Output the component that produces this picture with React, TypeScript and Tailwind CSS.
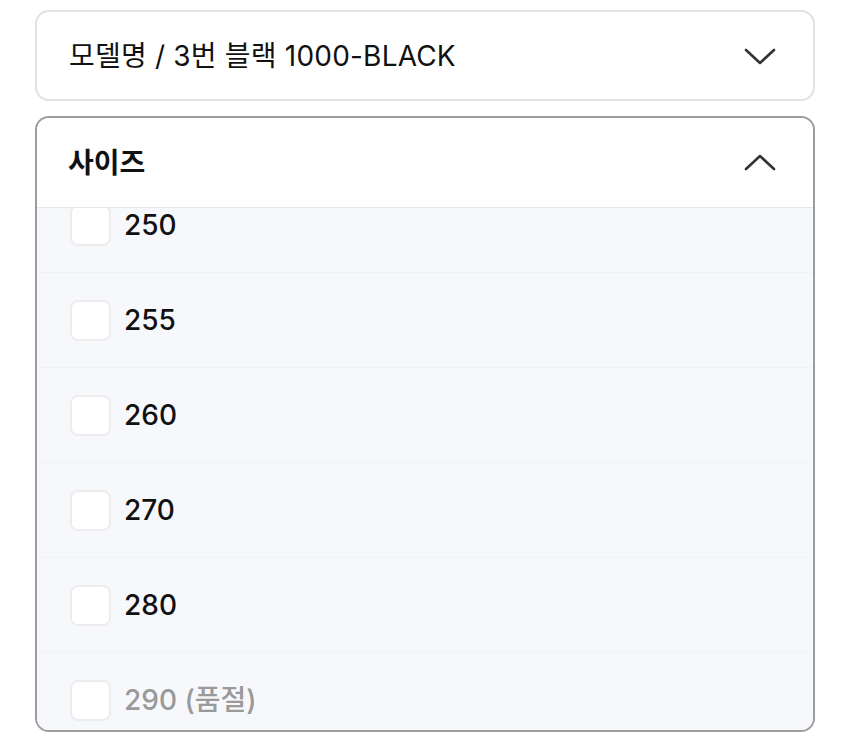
import React from "react";

const sizes = [
  { label: "250", soldOut: false },
  { label: "255", soldOut: false },
  { label: "260", soldOut: false },
  { label: "270", soldOut: false },
  { label: "280", soldOut: false },
  { label: "290 (품절)", soldOut: true },
];

const Chevron = ({ up }: { up?: boolean }) => (
  <svg width="34" height="20" viewBox="0 0 34 20" fill="none" stroke="#333" strokeWidth={2.6} strokeLinecap="round" strokeLinejoin="round">
    {up ? <path d="M3 16 L17 3 L31 16" /> : <path d="M3 4 L17 17 L31 4" />}
  </svg>
);

export default function App() {
  return (
    <div
      className="w-[850px] h-[741px] bg-white pt-[10px] px-[35px] overflow-hidden"
      style={{ fontFamily: 'Inter, "Noto Sans CJK KR", sans-serif' }}
    >
      {/* model select */}
      <div className="h-[91px] rounded-[14px] border-2 border-[#e2e2e2] flex items-center justify-between pl-[32px] pr-[36px]">
        <span className="text-[28px] text-[#111] tracking-[0.2px]">모델명 / 3번 블랙 1000-BLACK</span>
        <Chevron />
      </div>

      {/* size select */}
      <div className="mt-[15px] h-[616px] rounded-[14px] border-2 border-[#9c9c9c] overflow-hidden flex flex-col">
        <div className="h-[90px] shrink-0 flex items-center justify-between pl-[31px] pr-[36px] bg-white border-b border-[#e6e6e6]">
          <span className="text-[28px] font-bold text-[#111]">사이즈</span>
          <Chevron up />
        </div>
        <div className="flex-1 bg-[#f7f8fb] overflow-hidden">
          <div className="-mt-[30px]">
            {sizes.map((s) => (
              <div
                key={s.label}
                className="h-[95px] flex items-center pl-[33px] border-b border-[#f1f2f5]"
              >
                <div className="w-[41px] h-[41px] rounded-[8px] bg-white border-2 border-[#ededed]" />
                <span
                  className={`ml-[13px] text-[28px] font-medium ${s.soldOut ? "text-[#9a9a9a]" : "text-[#111]"}`}
                >
                  {s.label}
                </span>
              </div>
            ))}
          </div>
        </div>
      </div>
    </div>
  );
}
